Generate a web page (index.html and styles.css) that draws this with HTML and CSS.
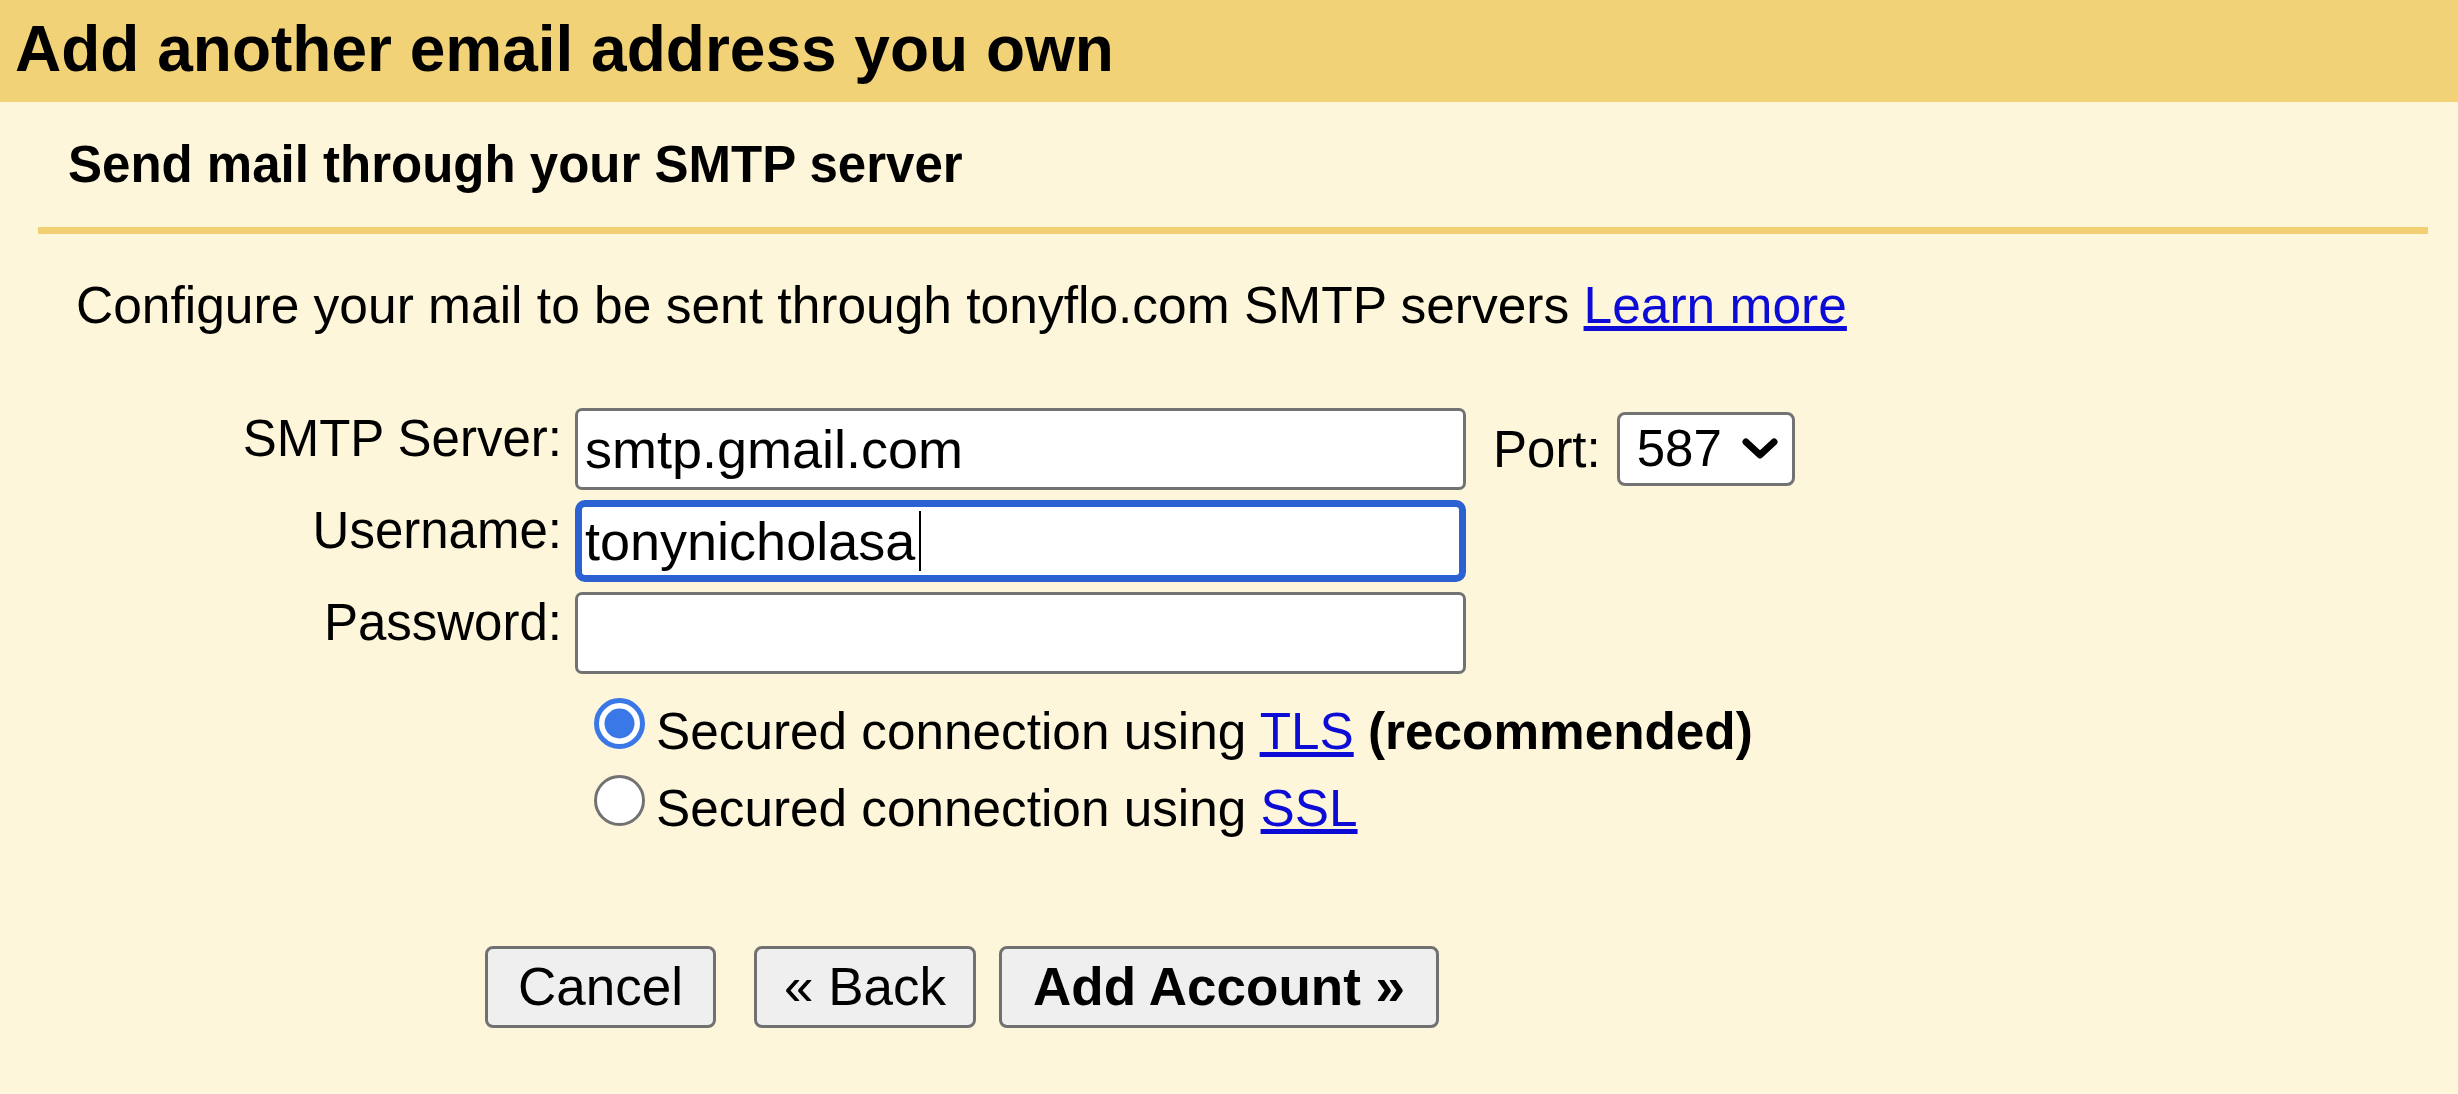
FILE: index.html
```html
<!DOCTYPE html>
<html lang="en">
<head>
<meta charset="utf-8">
<title>Add another email address you own</title>
<link rel="stylesheet" href="styles.css">
</head>
<body>
<div class="page">
  <header class="header">
    <h1 class="title">Add another email address you own</h1>
  </header>
  <main class="content">
    <h2 class="subtitle">Send mail through your SMTP server</h2>
    <div class="divider"></div>
    <p class="desc">Configure your mail to be sent through tonyflo.com SMTP servers <a href="#" class="link">Learn more</a></p>

    <div class="form">
      <div class="row">
        <label class="label">SMTP Server:</label>
        <div class="controls">
          <div class="field"><span class="value">smtp.gmail.com</span></div>
          <span class="port-label">Port:</span>
          <div class="select">
            <span class="value-sel">587</span>
            <svg class="chevron" width="38" height="24" viewBox="0 0 38 24"><polyline points="5,5 19,18 33,5" fill="none" stroke="#000" stroke-width="7" stroke-linecap="round" stroke-linejoin="round"/></svg>
          </div>
        </div>
      </div>
      <div class="row">
        <label class="label">Username:</label>
        <div class="controls">
          <div class="field focused"><span class="value">tonynicholasa</span><span class="caret"></span></div>
        </div>
      </div>
      <div class="row">
        <label class="label">Password:</label>
        <div class="controls">
          <div class="field"></div>
        </div>
      </div>
    </div>

    <div class="options">
      <div class="option">
        <svg class="radio" width="51" height="51" viewBox="0 0 51 51"><circle cx="25.5" cy="25.5" r="23" fill="#fff" stroke="#3a78e8" stroke-width="5"/><circle cx="25.5" cy="25.5" r="15" fill="#3a78e8"/></svg>
        <span class="opt-text">Secured connection using <a href="#" class="link">TLS</a> <b>(recommended)</b></span>
      </div>
      <div class="option">
        <svg class="radio" width="51" height="51" viewBox="0 0 51 51"><circle cx="25.5" cy="25.5" r="24" fill="#fff" stroke="#727272" stroke-width="3"/></svg>
        <span class="opt-text">Secured connection using <a href="#" class="link">SSL</a></span>
      </div>
    </div>

    <div class="buttons">
      <button class="btn btn-cancel" type="button">Cancel</button>
      <button class="btn btn-back" type="button">« Back</button>
      <button class="btn btn-add" type="button">Add Account »</button>
    </div>
  </main>
</div>
</body>
</html>
```

FILE: styles.css
```css
html, body {
  margin: 0;
  padding: 0;
}
body {
  background: #fdf6da;
  color: #000;
  font-family: "Liberation Sans", Arial, Helvetica, sans-serif;
  width: 2458px;
  height: 1094px;
  overflow: hidden;
}
.header {
  background: #f2d277;
  height: 102px;
  box-sizing: border-box;
  padding: 12px 0 0 15px;
}
.title {
  margin: 0;
  font-size: 64px;
  line-height: 74px;
  font-weight: bold;
}
.content {
  display: flex;
  flex-direction: column;
  align-items: flex-start;
}
.subtitle {
  margin: 33px 0 0 68px;
  font-size: 51px;
  line-height: 60px;
  font-weight: bold;
}
.divider {
  align-self: stretch;
  height: 7px;
  background: #f1d073;
  margin: 32px 30px 0 38px;
}
.desc {
  margin: 41px 0 0 76px;
  font-size: 51.5px;
  line-height: 60px;
}
.link {
  color: #0c0cd6;
  text-decoration: underline;
}
.form {
  margin-top: 73px;
  display: flex;
  flex-direction: column;
  gap: 10px;
}
.row {
  display: flex;
  align-items: flex-start;
}
.label {
  width: 562px;
  margin-right: 13px;
  padding-top: 3px;
  text-align: right;
  font-size: 51px;
  line-height: 56px;
}
.controls {
  display: flex;
  align-items: center;
}
.field {
  width: 891px;
  height: 82px;
  box-sizing: border-box;
  border: 3px solid #727272;
  border-radius: 7px;
  background: #fff;
  display: flex;
  align-items: center;
  padding: 0 7px;
  font-size: 54px;
  line-height: 60px;
}
.field.focused {
  border: 7px solid #2b61d1;
  border-radius: 10px;
  padding: 0 3px;
}
.caret {
  display: inline-block;
  width: 2px;
  height: 60px;
  background: #000;
  margin-left: 4px;
}
.port-label {
  margin-left: 27px;
  padding-top: 2px;
  font-size: 51px;
  line-height: 56px;
}
.select {
  margin-left: 16px;
  width: 178px;
  height: 74px;
  box-sizing: border-box;
  border: 3px solid #737373;
  border-radius: 8px;
  background: #fff;
  display: flex;
  align-items: center;
  padding-left: 17px;
  font-size: 51px;
  line-height: 56px;
}
.chevron {
  margin-left: 19px;
  flex: none;
}
.options {
  margin: 16px 0 0 575px;
  padding-left: 19px;
}
.option {
  display: flex;
  align-items: flex-start;
  height: 77px;
  font-size: 51.3px;
  line-height: 77px;
}
.opt-text {
  padding-top: 3px;
}
.radio {
  flex: none;
  margin-top: 8px;
  margin-right: 11px;
}
.buttons {
  display: flex;
  margin: 102px 0 0 485px;
}
.btn {
  height: 82px;
  box-sizing: border-box;
  border: 3px solid #717171;
  border-radius: 8px;
  background: #efefef;
  color: #000;
  font-family: "Liberation Sans", Arial, Helvetica, sans-serif;
  font-size: 53px;
  line-height: 60px;
  padding: 0;
  display: inline-flex;
  align-items: center;
  justify-content: center;
}
.btn-cancel {
  width: 231px;
  margin-right: 38px;
}
.btn-back {
  width: 222px;
  margin-right: 23px;
}
.btn-add {
  width: 440px;
  font-weight: bold;
}
```
